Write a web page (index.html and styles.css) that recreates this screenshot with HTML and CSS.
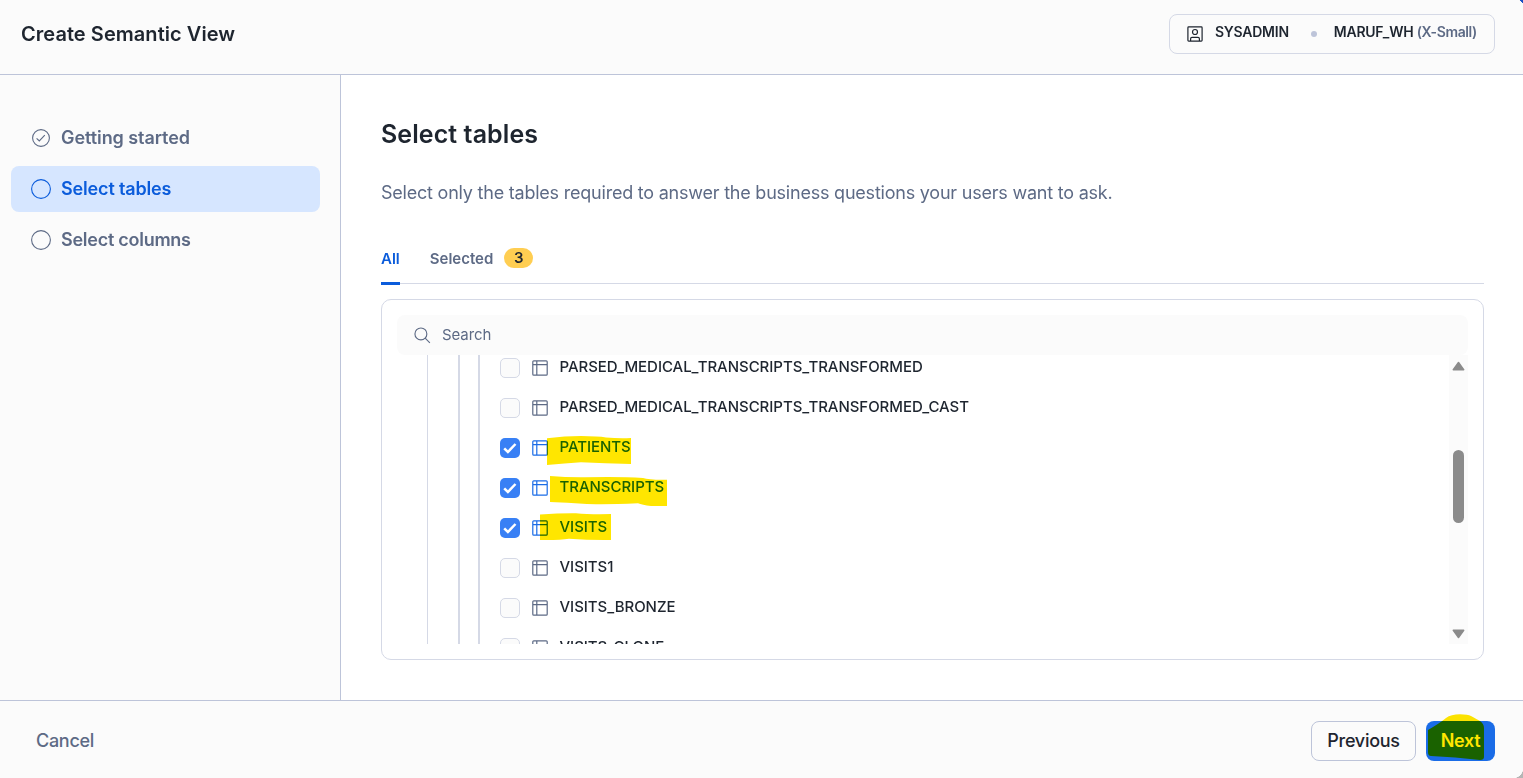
FILE: index.html
```html
<!DOCTYPE html>
<html lang="en">
<head>
<meta charset="utf-8">
<title>Create Semantic View</title>
<link rel="stylesheet" href="styles.css">
</head>
<body>
<svg class="defs" width="0" height="0" aria-hidden="true">
  <symbol id="table" viewBox="0 0 16 16"><g fill="none" stroke="currentColor" stroke-width="1.2"><rect x=".8" y=".8" width="14.4" height="14.4" rx="1"/><path d="M1 4.6h14M4.8 1v14"/></g></symbol>
  <symbol id="tick" viewBox="0 0 20 20"><path d="M4.2 10.3l3.7 3.7 7.6-8" fill="none" stroke="#fff" stroke-width="2.5"/></symbol>
</svg>
<div class="app">
  <header class="header">
    <h1 class="title">Create Semantic View</h1>
    <div class="context">
      <svg class="role-icon" viewBox="0 0 16 16" fill="none" stroke="currentColor" stroke-width="1.2"><rect x=".9" y=".9" width="14.2" height="14.2" rx=".8"/><circle cx="8" cy="6" r="2.5"/><path d="M3.6 15v-2.200q0-1.400 1.400-1.400h6q1.400 0 1.400 1.400V15"/></svg>
      <span class="role">SYSADMIN</span>
      <span class="dot"></span>
      <span class="warehouse">MARUF_WH <span class="size">(X-Small)</span></span>
    </div>
    <span class="corner-top"></span>
  </header>
  <div class="body">
    <nav class="sidebar">
      <div class="step done"><svg class="step-icon" viewBox="0 0 20 20" fill="none" stroke="currentColor" stroke-width="1.1"><circle cx="10" cy="10" r="8.400"/><path d="M5.600 10.300l2.700 2.700 5.500-5.900"/></svg><span>Getting started</span></div>
      <div class="step active"><svg class="step-icon" viewBox="0 0 20 20" fill="none" stroke="currentColor" stroke-width="1.1"><circle cx="10" cy="10" r="9.400"/></svg><span>Select tables</span></div>
      <div class="step"><svg class="step-icon" viewBox="0 0 20 20" fill="none" stroke="currentColor" stroke-width="1.1"><circle cx="10" cy="10" r="9.400"/></svg><span>Select columns</span></div>
    </nav>
    <main class="main">
      <h2 class="heading">Select tables</h2>
      <p class="lead">Select only the tables required to answer the business questions your users want to ask.</p>
      <div class="tabs">
        <div class="tab current">All</div>
        <div class="tab"><span class="tab-label">Selected</span><span class="badge">3</span></div>
      </div>
      <section class="picker">
        <div class="search"><svg class="search-icon" viewBox="0 0 18 18" fill="none" stroke="currentColor" stroke-width="1.2"><circle cx="7.300" cy="7.300" r="6.300"/><path d="M11.800 11.800l5 5"/></svg><span class="placeholder">Search</span></div>
        <div class="viewport">
          <div class="list">
            <div class="row"><span class="check"></span><svg class="icon"><use href="#table"/></svg><span class="name">PARSED_MEDICAL_TRANSCRIPTS_TRANSFORMED</span></div>
            <div class="row"><span class="check"></span><svg class="icon"><use href="#table"/></svg><span class="name">PARSED_MEDICAL_TRANSCRIPTS_TRANSFORMED_CAST</span></div>
            <div class="row"><span class="check on"><svg><use href="#tick"/></svg></span><svg class="icon blue"><use href="#table"/></svg><span class="name blue">PATIENTS</span>
              <svg class="marker" viewBox="500 428 200 40"><path d="M547 438.300Q565 436 581 436Q598 436 606 437.500Q619 438.600 631 438V464Q605 463.500 581 462.300Q565 463.500 547 465Z"/></svg></div>
            <div class="row"><span class="check on"><svg><use href="#tick"/></svg></span><svg class="icon blue"><use href="#table"/></svg><span class="name blue">TRANSCRIPTS</span>
              <svg class="marker" viewBox="500 468 200 40"><path d="M550 476Q567 477.500 585 477.300Q620 476.500 643 478Q649 480 667 479.700V506H651Q642 505 638 503.300Q600 504.800 583 503.700Q568 502.500 550 502Z"/></svg></div>
            <div class="row"><span class="check on"><svg><use href="#tick"/></svg></span><svg class="icon blue"><use href="#table"/></svg><span class="name blue">VISITS</span>
              <svg class="marker" viewBox="500 508 200 40"><path d="M540 514.600Q560 513 576 513.200Q590 514.500 611 514V540Q590 540.300 569 538.800Q560 540.300 540 540Z"/></svg></div>
            <div class="row"><span class="check"></span><svg class="icon"><use href="#table"/></svg><span class="name">VISITS1</span></div>
            <div class="row"><span class="check"></span><svg class="icon"><use href="#table"/></svg><span class="name">VISITS_BRONZE</span></div>
            <div class="row"><span class="check"></span><svg class="icon"><use href="#table"/></svg><span class="name">VISITS_CLONE</span></div>
          </div>
          <div class="scrollbar">
            <svg class="arrow" viewBox="0 0 13 10"><path d="M6.500 1.500L11.700 8.700H1.300Z"/></svg>
            <span class="thumb"></span>
            <svg class="arrow down" viewBox="0 0 13 10"><path d="M6.500 8.500L11.700 1.300H1.300Z"/></svg>
          </div>
        </div>
      </section>
    </main>
  </div>
  <footer class="footer">
    <span class="cancel">Cancel</span>
    <span class="button">Previous</span>
    <span class="button primary"><span>Next</span>
      <svg class="next-marker" viewBox="1426 711 69 50"><path d="M1428 730Q1440 723 1446 718Q1451 714.300 1460 714.300Q1468 714.300 1471 716Q1478 720 1480 721Q1484 724 1484 728V757Q1484 760 1480 760Q1455 757 1431 756Q1428 756 1428 752Z"/></svg></span>
    <span class="corner-bottom"></span>
  </footer>
</div>
</body>
</html>
```
FILE: styles.css
```css
* { box-sizing: border-box; }
body { margin: 0; font-family: Inter, "Liberation Sans", sans-serif; color: #1e252f; background: #fff; }
svg { display: block; }
.defs { position: absolute; }
.app { height: 778px; display: flex; flex-direction: column; overflow: hidden; }

.header { position: relative; height: 75px; flex: none; display: flex; align-items: flex-start; justify-content: space-between; padding: 14px 28px 0 21px; background: #fbfbfb; border-bottom: 1px solid #bdc4d9; }
.title { margin: 0; font-size: 20px; line-height: 40px; font-weight: 600; letter-spacing: .05px; }
.context { display: flex; align-items: center; width: 326px; height: 40px; padding-left: 17px; border: 1px solid #d5d9e6; border-radius: 8px; font-size: 14px; font-weight: 600; letter-spacing: -.25px; white-space: nowrap; }
.role-icon { width: 16px; height: 16px; margin-right: 12px; }
.role, .warehouse { line-height: 20px; margin-top: -4px; }
.dot { width: 6px; height: 6px; border-radius: 50%; background: #bdc4d9; margin: 0 17px 0 22px; }
.size { color: #5d6a85; letter-spacing: -.4px; }
.corner-top, .corner-bottom { position: absolute; right: 0; width: 10px; height: 10px; }
.corner-top { top: 0; background: radial-gradient(circle at 0 10px, transparent 11.5px, #1a4fc4 12px); }
.corner-bottom { bottom: 0; background: radial-gradient(circle at 0 0, transparent 10px, #b5b5b5 10.5px); }

.body { flex: 1; display: flex; min-height: 0; }
.sidebar { width: 341px; flex: none; display: flex; flex-direction: column; gap: 5px; padding: 40px 20px 0 11px; background: #fbfbfb; border-right: 1px solid #bdc4d9; }
.step { display: flex; align-items: center; gap: 10px; height: 46px; padding-left: 20px; border-radius: 8px; color: #5d6a85; font-size: 18px; font-weight: 600; letter-spacing: -.26px; }
.step span { padding-bottom: 2px; }
.step.done { letter-spacing: -.07px; }
.step.active { background: #d6e6ff; color: #0b5cdb; letter-spacing: -.16px; }
.step-icon { width: 20px; height: 20px; }

.main { flex: 1; padding: 40px 39px 0 40px; min-width: 0; }
.heading { margin: 0; font-size: 25px; line-height: 38px; font-weight: 600; letter-spacing: .08px; }
.lead { margin: 26px 0 0; font-size: 18px; line-height: 28px; letter-spacing: -.22px; color: #5d6a85; }
.tabs { display: flex; gap: 30px; height: 51px; margin-top: 26px; border-bottom: 1px solid #d5d9e6; font-size: 15px; font-weight: 600; color: #5d6a85; }
.tab { display: flex; align-items: center; height: 52px; padding-bottom: 2px; }
.current { color: #0b5cdb; border-bottom: 3px solid #0b5cdb; padding: 1px 0 0; }
.badge { width: 29px; height: 20px; margin-left: 11px; border-radius: 10px; background: #ffce52; color: #1e252f; text-align: center; line-height: 20px; }

.picker { height: 361px; margin-top: 15px; padding: 15px; border: 1px solid #d5d9e6; border-radius: 10px; }
.search { display: flex; align-items: center; gap: 11px; height: 40px; padding-left: 17px; border-radius: 8px; background: #fbfbfb; color: #5d6a85; font-size: 15px; letter-spacing: -.1px; }
.search-icon { width: 17px; height: 17px; }
.placeholder { padding-bottom: 2px; }
.viewport { display: flex; height: 289px; overflow: hidden; }
.list { flex: 1; margin-top: -7px; height: 320px; background: linear-gradient(#d5d9e6, #d5d9e6) 30px 0 / 1px 100% no-repeat, linear-gradient(#d5d9e6, #d5d9e6) 61px 0 / 2px 100% no-repeat, linear-gradient(#d5d9e6, #d5d9e6) 81px 0 / 2px 100% no-repeat; }
.row { position: relative; display: flex; align-items: center; height: 40px; padding-left: 103px; }
.check { width: 20px; height: 20px; border: 1px solid #d5d9e6; border-radius: 5px; background: #fbfbfb; }
.check.on { border: 0; background: #3880f5; }
.check svg { width: 20px; height: 20px; }
.icon { width: 16px; height: 16px; margin: 0 11.5px 0 12px; color: #5d6a85; }
.name { margin-top: -3px; font-size: 15px; line-height: 20px; font-weight: 500; letter-spacing: -.04px; }
.blue { color: #1a6ce7; }
.marker { position: absolute; left: 103px; top: 0; width: 200px; height: 40px; fill: #ffe600; mix-blend-mode: multiply; }
.scrollbar { width: 19px; display: flex; flex-direction: column; align-items: center; padding: 6px 0 5px; background: #fbfbfb; }
.arrow { width: 13px; height: 10px; fill: #8b8b8b; stroke: #8b8b8b; stroke-width: 1.5; stroke-linejoin: round; }
.thumb { width: 11px; height: 73px; margin-top: 79px; border-radius: 6px; background: #8b8b8b; }
.down { margin-top: auto; }

.footer { position: relative; height: 78px; flex: none; display: flex; align-items: center; gap: 10px; padding: 2px 28px 0 36px; background: #fbfbfb; border-top: 1px solid #bdc4d9; font-size: 18px; font-weight: 500; letter-spacing: -.28px; }
.cancel { margin-right: auto; color: #5d6a85; }
.button { display: flex; align-items: center; justify-content: center; width: 105px; height: 40px; border: 1px solid #bdc4d9; border-radius: 8px; }
.primary { position: relative; width: 69px; border: 0; background: #1a6ce7; color: #fff; font-weight: 600; }
.next-marker { position: absolute; left: 0; top: -10px; width: 69px; height: 50px; fill: #ffe600; mix-blend-mode: multiply; }
```
